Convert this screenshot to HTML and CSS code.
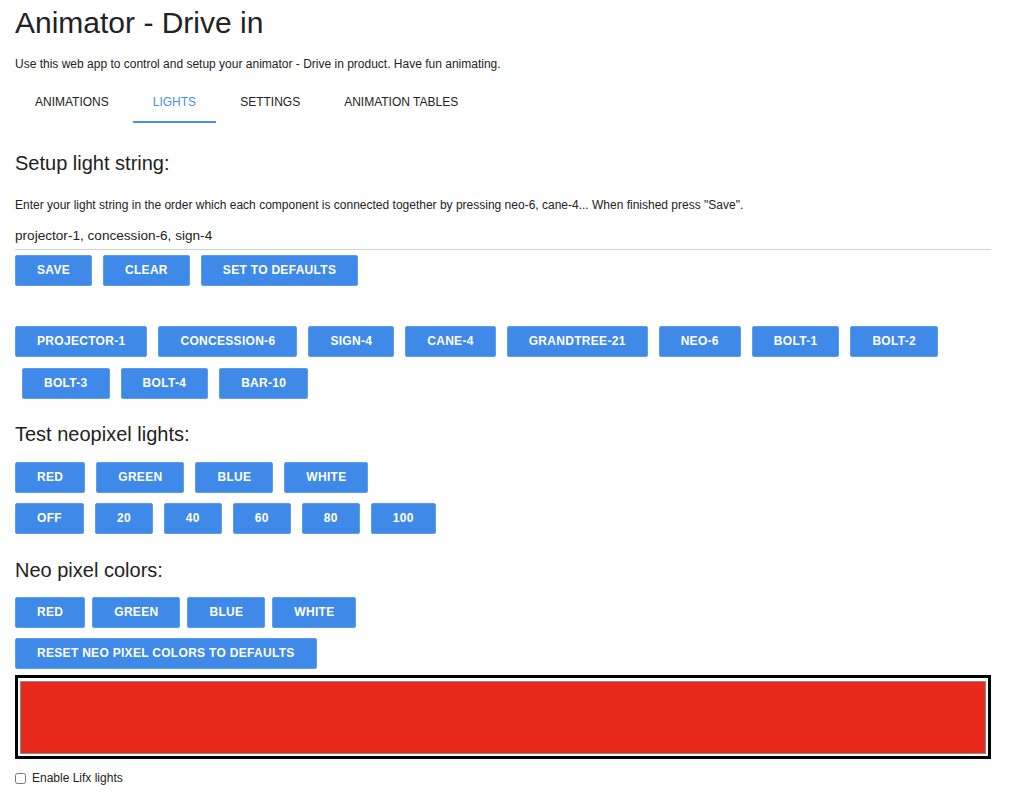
FILE: index.html
```html
<!DOCTYPE html>
<html lang="en">
  <head>
    <meta charset="UTF-8" />
    <meta name="viewport" content="width=device-width, initial-scale=1.0" />
    <title>Animator - Drive in</title>
    <link rel="stylesheet" href="styles.css">
  </head>
  <body>
    <div class="app">
      <h1>Animator - Drive in</h1>
      <p class="intro">Use this web app to control and setup your animator - Drive in product. Have fun animating.</p>

      <nav class="tabs">
        <a class="tab">ANIMATIONS</a>
        <a class="tab active">LIGHTS</a>
        <a class="tab">SETTINGS</a>
        <a class="tab">ANIMATION TABLES</a>
      </nav>

      <section class="panel">
        <h2 class="first">Setup light string:</h2>
        <p class="hint">Enter your light string in the order which each component is connected together by pressing neo-6, cane-4... When finished press "Save".</p>
        <input class="string-input" type="text" value="projector-1, concession-6, sign-4">
        <div class="btn-row save-row">
          <button>SAVE</button>
          <button>CLEAR</button>
          <button>SET TO DEFAULTS</button>
        </div>

        <div class="components">
          <div class="btn-row">
            <button>PROJECTOR-1</button>
            <button>CONCESSION-6</button>
            <button>SIGN-4</button>
            <button>CANE-4</button>
            <button>GRANDTREE-21</button>
            <button>NEO-6</button>
            <button>BOLT-1</button>
            <button>BOLT-2</button>
          </div>
          <div class="btn-row indent">
            <button>BOLT-3</button>
            <button>BOLT-4</button>
            <button>BAR-10</button>
          </div>
        </div>

        <h2 class="test-title">Test neopixel lights:</h2>
        <div class="btn-row test-colors">
          <button>RED</button>
          <button>GREEN</button>
          <button>BLUE</button>
          <button>WHITE</button>
        </div>
        <div class="btn-row levels">
          <button>OFF</button>
          <button>20</button>
          <button>40</button>
          <button>60</button>
          <button>80</button>
          <button>100</button>
        </div>

        <h2 class="neo-title">Neo pixel colors:</h2>
        <div class="btn-row tight neo-colors">
          <button>RED</button>
          <button>GREEN</button>
          <button>BLUE</button>
          <button>WHITE</button>
        </div>
        <div class="btn-row reset-row">
          <button>RESET NEO PIXEL COLORS TO DEFAULTS</button>
        </div>

        <div class="color-box">
          <div class="swatch"></div>
        </div>

        <label class="lifx">
          <input type="checkbox">
          Enable Lifx lights
        </label>
      </section>
    </div>
  </body>
</html>
```

FILE: styles.css
```css
* {
  margin: 0;
  padding: 0;
  box-sizing: border-box;
}

body {
  font-family: "Liberation Sans", Arial, sans-serif;
  color: #222;
  background: #fff;
}

.app {
  padding: 0 15px;
}

h1 {
  margin-top: 5px;
  font-size: 30px;
  line-height: 36px;
  font-weight: normal;
  color: #222;
}

.intro {
  margin-top: 15px;
  font-size: 12px;
  line-height: 16px;
}

.tabs {
  display: flex;
  gap: 4px;
  margin-top: 10px;
}

.tab {
  padding: 12px 20px 11px;
  font-size: 12px;
  line-height: 16px;
  color: #222;
  border-bottom: 2px solid transparent;
  cursor: pointer;
}

.tab.active {
  color: #4a8fe6;
  border-bottom-color: #4a8fe6;
}

h2 {
  font-size: 20px;
  line-height: 24px;
  font-weight: normal;
  color: #222;
}

h2.first {
  margin-top: 28px;
}

.hint {
  margin-top: 22px;
  font-size: 12px;
  line-height: 16px;
}

.string-input {
  display: block;
  width: 976px;
  margin-top: 10px;
  padding: 4px 0;
  border: none;
  border-bottom: 1px solid #d0d0d0;
  font-family: "Liberation Sans", Arial, sans-serif;
  font-size: 13.6px;
  line-height: 18px;
  color: #222;
  outline: none;
}

.btn-row {
  display: flex;
  gap: 11px;
}

.btn-row.tight {
  gap: 7px;
}

.btn-row.indent {
  padding-left: 7px;
  margin-top: 11px;
}

button {
  height: 31px;
  padding: 0 21px;
  background: #3f8ae8;
  color: #fff;
  border: 1px solid #5c9cec;
  border-radius: 2px;
  font-family: "Liberation Sans", Arial, sans-serif;
  font-size: 12px;
  font-weight: bold;
  letter-spacing: 0.3px;
  line-height: 29px;
  cursor: pointer;
}

.save-row {
  margin-top: 5px;
}

.components {
  margin-top: 40px;
}

.test-title {
  margin-top: 23px;
}

.test-colors {
  margin-top: 16px;
}

.levels {
  margin-top: 10px;
}

.neo-title {
  margin-top: 24px;
}

.neo-colors {
  margin-top: 15px;
}

.reset-row {
  margin-top: 10px;
}

.color-box {
  width: 976px;
  margin-top: 6px;
  padding: 3px 2px 2px;
  border: 3px solid #000;
}

.swatch {
  height: 73px;
  background: #e82a1d;
  border: 1px solid #8a8a8a;
}

.lifx {
  display: flex;
  align-items: center;
  margin-top: 11px;
  font-size: 12px;
  line-height: 16px;
}

.lifx input {
  width: 11px;
  height: 11px;
  margin: 0 6px 0 0;
}
```
